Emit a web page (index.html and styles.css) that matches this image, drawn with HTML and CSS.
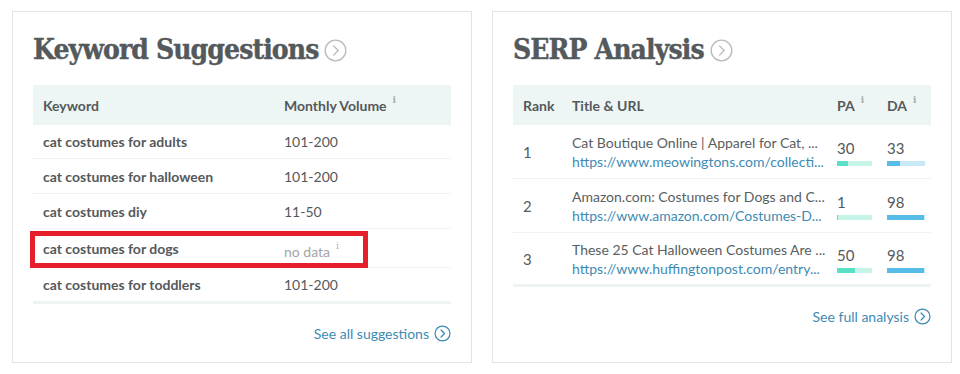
FILE: index.html
```html
<!DOCTYPE html>
<html>
<head>
<meta charset="utf-8">
<link rel="stylesheet" href="styles.css">
</head>
<body>
<div class="page">
  <section class="card">
    <h2 class="card-title">Keyword Suggestions
      <svg class="title-icon" viewBox="0 0 24 24"><circle cx="12" cy="12" r="10.8"/><path d="M10 7.2 L14.8 12 L10 16.8"/></svg>
    </h2>
    <div class="kw-table">
      <div class="kw-row kw-head">
        <div class="cell">Keyword</div>
        <div class="cell">Monthly Volume<sup class="info">i</sup></div>
      </div>
      <div class="kw-row"><div class="cell kw">cat costumes for adults</div><div class="cell vol">101-200</div></div>
      <div class="kw-row"><div class="cell kw">cat costumes for halloween</div><div class="cell vol">101-200</div></div>
      <div class="kw-row"><div class="cell kw">cat costumes diy</div><div class="cell vol">11-50</div></div>
      <div class="kw-row kw-flag">
        <div class="cell kw">cat costumes for dogs</div><div class="cell vol nodata">no data<sup class="info">i</sup></div>
        <div class="highlight"></div>
      </div>
      <div class="kw-row kw-last"><div class="cell kw">cat costumes for toddlers</div><div class="cell vol">101-200</div></div>
    </div>
    <div class="more"><a class="more-link">See all suggestions
      <svg class="link-icon" viewBox="0 0 18 18"><circle cx="9" cy="9" r="7.9"/><path d="M7.5 5.3 L11.1 9 L7.5 12.7"/></svg></a></div>
  </section>

  <section class="card">
    <h2 class="card-title">SERP Analysis
      <svg class="title-icon" viewBox="0 0 24 24"><circle cx="12" cy="12" r="10.8"/><path d="M10 7.2 L14.8 12 L10 16.8"/></svg>
    </h2>
    <div class="serp-table">
      <div class="serp-row serp-head">
        <div class="cell">Rank</div>
        <div class="cell">Title &amp; URL</div>
        <div class="cell">PA<sup class="info">i</sup></div>
        <div class="cell">DA<sup class="info">i</sup></div>
      </div>
      <div class="serp-row">
        <div class="cell rank">1</div>
        <div class="cell tu"><div class="title">Cat Boutique Online | Apparel for Cat, ...</div><div class="url">https://www.meowingtons.com/collecti...</div></div>
        <div class="cell metric"><div class="num">30</div><div class="bar pa"><span style="width:31%"></span></div></div>
        <div class="cell metric"><div class="num">33</div><div class="bar da"><span style="width:34%"></span></div></div>
      </div>
      <div class="serp-row">
        <div class="cell rank">2</div>
        <div class="cell tu"><div class="title">Amazon.com: Costumes for Dogs and C...</div><div class="url">https://www.amazon.com/Costumes-D...</div></div>
        <div class="cell metric"><div class="num">1</div><div class="bar pa"><span style="width:1%"></span></div></div>
        <div class="cell metric"><div class="num">98</div><div class="bar da"><span style="width:97%"></span></div></div>
      </div>
      <div class="serp-row serp-last">
        <div class="cell rank">3</div>
        <div class="cell tu"><div class="title">These 25 Cat Halloween Costumes Are ...</div><div class="url">https://www.huffingtonpost.com/entry...</div></div>
        <div class="cell metric"><div class="num">50</div><div class="bar pa"><span style="width:51%"></span></div></div>
        <div class="cell metric"><div class="num">98</div><div class="bar da"><span style="width:97%"></span></div></div>
      </div>
    </div>
    <div class="more"><a class="more-link">See full analysis
      <svg class="link-icon" viewBox="0 0 18 18"><circle cx="9" cy="9" r="7.9"/><path d="M7.5 5.3 L11.1 9 L7.5 12.7"/></svg></a></div>
  </section>
</div>
</body>
</html>
```

FILE: styles.css
```css
* { box-sizing: border-box; }
html, body { margin: 0; padding: 0; background: #fff; }
body { font-family: Lato, "Open Sans", sans-serif; color: #55595b; }

.page {
  display: flex;
  gap: 20px;
  padding: 11px 0 0 12px;
}

.card {
  width: 460px;
  height: 352px;
  border: 1px solid #dfe4e4;
  padding: 22px 20px 0 20px;
  display: flex;
  flex-direction: column;
}

.card-title {
  margin: 0 0 19px 0;
  height: 32px;
  display: flex;
  align-items: center;
  gap: 6px;
  font-family: "DejaVu Serif", serif;
  font-stretch: condensed;
  font-weight: 900;
  font-size: 28px;
  letter-spacing: -0.9px;
  line-height: 32px;
  color: #54595b;
  -webkit-text-stroke: 0.4px #54595b;
}

.title-icon {
  width: 23px;
  height: 23px;
  fill: none;
  stroke: #b9bcbd;
  stroke-width: 1.4;
  stroke-linecap: round;
  stroke-linejoin: round;
}

.cell { font-size: 14px; }

.info {
  font-family: "DejaVu Serif", serif;
  font-size: 9px;
  color: #a9aeae;
  vertical-align: top;
  position: relative;
  top: -1px;
  margin-left: 6px;
  line-height: 1;
}

/* keyword table */
.kw-row {
  display: grid;
  grid-template-columns: 251px 167px;
  align-items: center;
  height: 35px;
  border-bottom: 1px solid #eef2f2;
}
.kw-row .cell:first-child { padding-left: 10px; }
.kw-head {
  height: 40px;
  background: #eef6f5;
  border-bottom: none;
}
.kw-head .cell { font-weight: bold; }
.kw { font-weight: bold; }
.vol { font-weight: normal; }
.kw-flag { height: 39px; position: relative; }
.nodata { color: #a2a6a7; padding-top: 6px; }
.kw-last { height: 36px; border-bottom: 3px solid #eef4f3; }
.kw-row:nth-child(2) { height: 34px; }

.highlight {
  position: absolute;
  left: -3px;
  top: 2px;
  width: 338px;
  height: 37px;
  border: 5px solid #e5202b;
}

/* serp table */
.serp-row {
  display: grid;
  grid-template-columns: 59px 265px 50px 44px;
  align-items: center;
  height: 54px;
  border-bottom: 1px solid #eef2f2;
}
.serp-row .cell:first-child { padding-left: 10px; }
.serp-head {
  height: 40px;
  background: #eef6f5;
  border-bottom: none;
}
.serp-head .cell { font-weight: bold; }
.serp-last { border-bottom: 3px solid #eef4f3; }
.rank { font-size: 15px; }
.tu { line-height: 19px; white-space: nowrap; }
.title { color: #595e60; }
.url { color: #3d8bb3; }
.metric { padding-top: 2px; }
.num { font-size: 15px; line-height: 18px; }
.bar {
  margin-top: 4px;
  height: 5px;
  display: flex;
}
.bar span { display: block; height: 100%; }
.bar.pa { width: 35px; background: #c4f5e8; }
.bar.pa span { background: #5ae0c6; }
.bar.da { width: 38px; background: #c8eaf7; }
.bar.da span { background: #56bde9; }

.more {
  display: flex;
  justify-content: flex-end;
  margin-top: 21px;
}
.more-link {
  display: flex;
  align-items: center;
  gap: 5px;
  color: #3d8bb3;
  font-size: 14px;
}
.link-icon {
  width: 17px;
  height: 17px;
  fill: none;
  stroke: #3d8bb3;
  stroke-width: 1.3;
  stroke-linecap: round;
  stroke-linejoin: round;
}
```
